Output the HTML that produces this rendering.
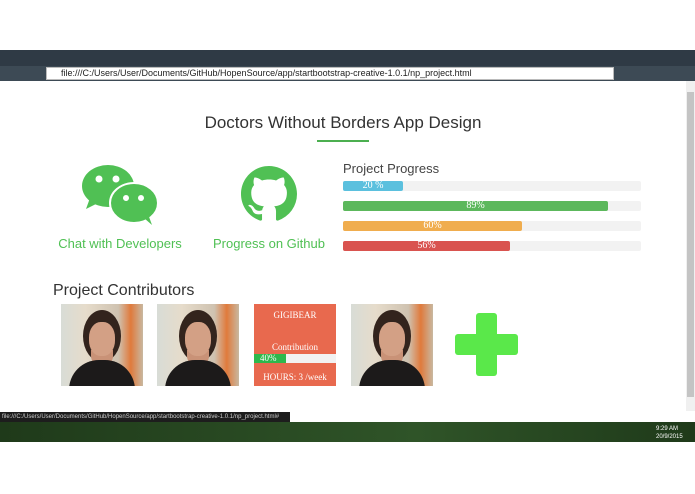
<!DOCTYPE html>
<html><head><style>
*{margin:0;padding:0;box-sizing:border-box}
body{width:695px;height:494px;background:#fff;position:relative;overflow:hidden;font-family:"Liberation Sans",sans-serif}
.a{position:absolute}
.bar{position:absolute;left:343px;width:298px;height:10px;background:#f2f2f2;border-radius:2px}
.bar div{height:10px;border-radius:2px;color:#fff;font:10px "Liberation Serif",serif;text-align:center;line-height:10px}
.photo{position:absolute;top:304px;width:82px;height:82px;background:linear-gradient(90deg,#d8dcd6 0%,#e6dccb 30%,#cfc2b0 70%,#e07a3c 85%,#c8b8a0 100%);overflow:hidden}
.photo .h{position:absolute;left:22px;top:6px;width:38px;height:52px;border-radius:50%;background:#33241d}
.photo .f{position:absolute;left:28px;top:18px;width:26px;height:34px;border-radius:45%;background:#d3a085}
.photo .b{position:absolute;left:8px;top:56px;width:66px;height:30px;border-radius:30px 30px 0 0;background:#1c1a1a}
.photo .n{position:absolute;left:30px;top:46px;width:22px;height:16px;background:#c99277;border-radius:0 0 10px 10px}
</style></head><body>
<div class="a" style="left:0;top:50px;width:695px;height:16px;background:#2f3a45"></div>
<div class="a" style="left:0;top:66px;width:695px;height:15px;background:#3d4a55"></div>
<div class="a" style="left:46px;top:67px;width:568px;height:13px;background:#fff;border:1px solid #bbb;font-size:9px;line-height:11px;padding-left:14px;color:#222">file:///C:/Users/User/Documents/GitHub/HopenSource/app/startbootstrap-creative-1.0.1/np_project.html</div>
<div class="a" style="left:686px;top:81px;width:9px;height:330px;background:#f0f0f0"></div>
<div class="a" style="left:687px;top:92px;width:7px;height:305px;background:#c4c4c4"></div>

<div class="a" style="left:0;top:113px;width:686px;text-align:center;font-size:17px;color:#333">Doctors Without Borders App Design</div>
<div class="a" style="left:317px;top:140px;width:52px;height:2px;background:#4caf50"></div>

<svg class="a" style="left:82px;top:164px" width="76" height="62" viewBox="0 0 76 62">
<ellipse cx="26" cy="22" rx="26" ry="21" fill="#50c054"/><path d="M8 34 L4 45 L18 38Z" fill="#50c054"/>
<ellipse cx="52" cy="39" rx="24" ry="20" fill="#50c054" stroke="#fff" stroke-width="2"/><path d="M62 54 L70 61 L66 50Z" fill="#50c054"/>
<circle cx="17" cy="15" r="3.5" fill="#fff"/><circle cx="34" cy="15" r="3.5" fill="#fff"/>
<circle cx="44" cy="34" r="3" fill="#fff"/><circle cx="59" cy="34" r="3" fill="#fff"/></svg>
<div class="a" style="left:50px;top:236px;width:140px;text-align:center;font-size:13px;color:#50c054">Chat with Developers</div>

<svg class="a" style="left:241px;top:166px" width="56" height="56" viewBox="0 0 16 16"><path fill="#50c054" d="M8 0C3.58 0 0 3.58 0 8c0 3.54 2.290 6.530 5.470 7.590.4.07.55-.17.55-.38 0-.19-.01-.82-.01-1.49-2.010.37-2.530-.49-2.690-.94-.09-.23-.48-.94-.82-1.130-.28-.15-.68-.52-.01-.53.63-.01 1.080.58 1.230.82.72 1.210 1.870.87 2.330.66.07-.52.28-.87.51-1.070-1.780-.2-3.640-.89-3.640-3.950 0-.87.31-1.590.82-2.150-.08-.2-.36-1.020.08-2.120 0 0 .67-.21 2.200.82.64-.18 1.320-.27 2-.27.68 0 1.360.09 2 .27 1.530-1.040 2.200-.82 2.200-.82.44 1.100.16 1.920.08 2.120.51.56.82 1.270.82 2.150 0 3.070-1.870 3.750-3.650 3.950.29.25.54.73.54 1.480 0 1.070-.01 1.930-.01 2.200 0 .21.15.46.55.38A8.013 8.013 0 0016 8c0-4.420-3.580-8-8-8z"/></svg>
<div class="a" style="left:200px;top:236px;width:138px;text-align:center;font-size:13px;color:#50c054">Progress on Github</div>

<div class="a" style="left:343px;top:161px;font-size:13px;color:#444">Project Progress</div>
<div class="bar" style="top:181px"><div style="width:60px;background:#5bc0de">20 %</div></div>
<div class="bar" style="top:201px"><div style="width:265px;background:#5cb85c">89%</div></div>
<div class="bar" style="top:221px"><div style="width:179px;background:#f0ad4e">60%</div></div>
<div class="bar" style="top:241px"><div style="width:167px;background:#d9534f">56%</div></div>

<div class="a" style="left:53px;top:282px;font-size:16px;color:#333">Project Contributors</div>
<div class="photo" style="left:61px"><div class="h"></div><div class="n"></div><div class="b"></div><div class="f"></div></div>
<div class="photo" style="left:157px"><div class="h"></div><div class="n"></div><div class="b"></div><div class="f"></div></div>
<div class="a" style="left:254px;top:304px;width:82px;height:82px;background:#e8694e;color:#fff;font:9px 'Liberation Serif',serif;text-align:center">
<div style="margin-top:6px">GIGIBEAR</div>
<div style="margin-top:22px">Contribution</div>
<div style="margin-top:2px;height:9px;background:#f2f2f2;text-align:left"><div style="width:32px;height:9px;background:#2eb84c;padding-left:6px;line-height:9px">40%</div></div>
<div style="margin-top:9px">HOURS: 3 /week</div></div>
<div class="photo" style="left:351px"><div class="h"></div><div class="n"></div><div class="b"></div><div class="f"></div></div>
<div class="a" style="left:476px;top:313px;width:21px;height:63px;background:#5ae84a;border-radius:3px"></div>
<div class="a" style="left:455px;top:334px;width:63px;height:21px;background:#5ae84a;border-radius:3px"></div>

<div class="a" style="left:0;top:412px;width:290px;height:10px;background:#1d1d1d;color:#ccc;font-size:6px;line-height:10px;padding-left:2px">file:///C:/Users/User/Documents/GitHub/HopenSource/app/startbootstrap-creative-1.0.1/np_project.html#</div>
<div class="a" style="left:0;top:422px;width:695px;height:20px;background:linear-gradient(90deg,#1f3a1a,#2f5428 60%,#1f3a1a)"></div>
<div class="a" style="left:656px;top:425px;font-size:6px;color:#fff;line-height:8px">9:29 AM<br>20/9/2015</div>
</body></html>
